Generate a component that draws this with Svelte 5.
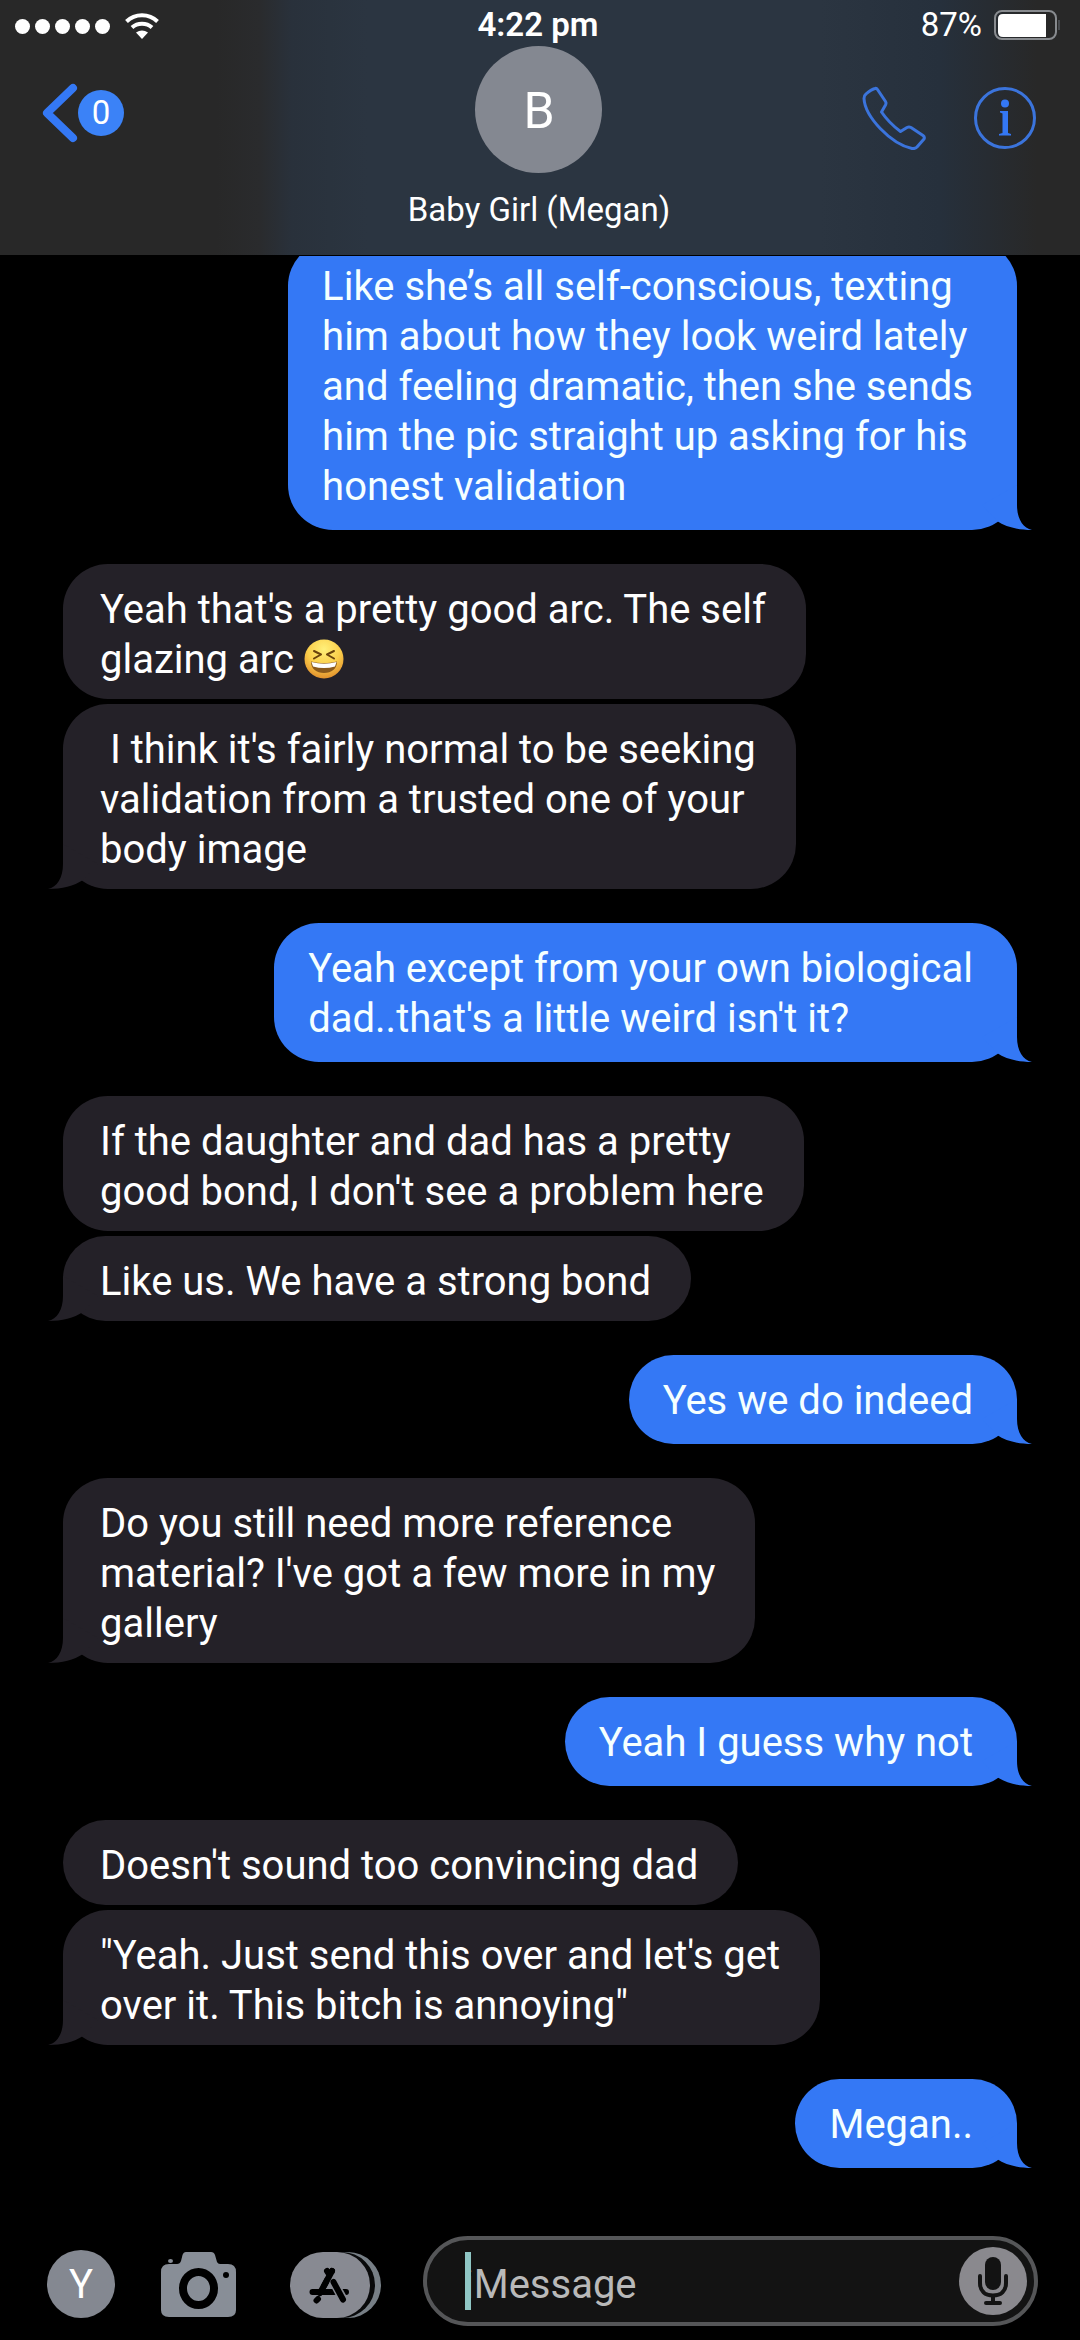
<script>
  let contact = 'Baby Girl (Megan)';
  let draft = '';

  const messages = [
    { from: 'me', last: true, text: 'Like she’s all self-conscious, texting\nhim about how they look weird lately\nand feeling dramatic, then she sends\nhim the pic straight up asking for his\nhonest validation' },
    { from: 'them', text: "Yeah that's a pretty good arc. The self\nglazing arc ", emoji: true },
    { from: 'them', last: true, text: " I think it's fairly normal to be seeking\nvalidation from a trusted one of your\nbody image" },
    { from: 'me', last: true, text: "Yeah except from your own biological\ndad..that's a little weird isn't it?" },
    { from: 'them', text: "If the daughter and dad has a pretty\ngood bond, I don't see a problem here" },
    { from: 'them', last: true, text: 'Like us. We have a strong bond' },
    { from: 'me', last: true, text: 'Yes we do indeed' },
    { from: 'them', last: true, text: "Do you still need more reference\nmaterial? I've got a few more in my\ngallery" },
    { from: 'me', last: true, text: 'Yeah I guess why not' },
    { from: 'them', text: "Doesn't sound too convincing dad" },
    { from: 'them', last: true, text: '"Yeah. Just send this over and let\'s get\nover it. This bitch is annoying"' },
    { from: 'me', last: true, text: 'Megan..' }
  ];
</script>

<div class="app">
  <header>
    <div class="status">
      <div class="signal">
        {#each Array(5) as _}
          <span class="dot"></span>
        {/each}
        <svg class="wifi" width="34" height="26" viewBox="0 0 34 26" fill="none" stroke="#fff" stroke-width="4">
          <path d="M1.5 8.5C10 .2 24 .2 32.500 8.500" />
          <path d="M7 14.500C12.500 9.500 21.500 9.500 27 14.500" />
          <path d="M11 19.500Q17 15.500 23 19.500L17 26Z" fill="#fff" stroke="none" />
        </svg>
      </div>
      <time>4:22 pm</time>
      <div class="power">
        <span>87%</span>
        <svg width="67" height="30" viewBox="0 0 67 30">
          <rect x="1" y="1" width="61" height="28" rx="7" fill="none" stroke="#888b8f" stroke-width="2" />
          <path d="M9 4H52V27H9Q4 27 4 22V9Q4 4 9 4Z" fill="#fff" />
          <path d="M65 10V20" stroke="#6b7178" stroke-width="1" />
        </svg>
      </div>
    </div>

    <nav>
      <button class="back" aria-label="Back">
        <svg width="36" height="60" viewBox="0 0 36 60" fill="none" stroke="#3478f5" stroke-width="8" stroke-linecap="round" stroke-linejoin="round">
          <path d="M31 5L5 30L31 55" />
        </svg>
        <span class="count">0</span>
      </button>

      <div class="contact">
        <span class="avatar">B</span>
        <h1>{contact}</h1>
      </div>

      <div class="actions">
        <button aria-label="Call">
          <svg width="64" height="64" viewBox="0 0 64 64" fill="none" stroke="#3b74dc" stroke-width="3" stroke-linejoin="round">
            <path d="M13 2.500Q14.500 2 15.500 3.500L23.500 15.500Q24.500 17 23.500 19L19.500 26Q27 37 38.500 45.500L45 41.500Q47 40.500 49 41.500L61 49.500Q63 51 62 53L55 61Q53 63 50 62.500C29 58 3 31 2 12.500Q2 9.500 4 8Q9 3.500 13 2.500Z" />
          </svg>
        </button>
        <button aria-label="Info">
          <svg width="62" height="62" viewBox="0 0 62 62">
            <circle cx="31" cy="31" r="29.500" fill="none" stroke="#3b74dc" stroke-width="3" />
            <circle cx="31" cy="16.500" r="4" fill="#3478f5" />
            <path d="M26 24H34V46L37 47V48.500H25V47L28.500 46V26.500L26 25.500Z" fill="#3478f5" />
          </svg>
        </button>
      </div>
    </nav>
  </header>

  <main>
    {#each messages as message}
      <div class="bubble {message.from}" class:last={message.last}>
        <p>{message.text}{#if message.emoji}<svg class="emoji" role="img" aria-label="😆" width="40" height="40" viewBox="0 0 40 40">
            <defs>
              <radialGradient id="face" cx="50%" cy="25%" r="75%">
                <stop offset="0" stop-color="#fff07a" />
                <stop offset="0.550" stop-color="#fbcf4b" />
                <stop offset="1" stop-color="#e2912d" />
              </radialGradient>
            </defs>
            <circle cx="20" cy="20" r="19.500" fill="url(#face)" />
            <path d="M10 12L17 15.500L10 19.500M30 12L23 15.500L30 19.500" fill="none" stroke="#6b430c" stroke-width="2" stroke-linecap="round" stroke-linejoin="round" />
            <path d="M7 22.500Q20 26 33 22.500C33 30 27.500 34 20 34S7 30 7 22.500Z" fill="#8b5a1c" />
            <path d="M7.500 23Q20 26.500 32.500 23L31 27.500Q20 30.500 9 27.500Z" fill="#fff" />
          </svg>{/if}</p>
        {#if message.last}
          <svg class="tail" width="50" height="45" viewBox="0 0 50 45" fill="currentColor">
            <path d="M35 0V20C35 34 41 43 50 45C36 45 24 42 15 36L0 20Z" />
          </svg>
        {/if}
      </div>
    {/each}
  </main>

  <footer>
    <div class="tools">
      <button class="me-avatar">Y</button>
      <button class="camera" aria-label="Camera">
        <svg width="75" height="66" viewBox="0 0 75 66">
          <path d="M25 0H50Q53 0 54 3L56 10Q57 12 59 12H67Q75 12 75 20V58Q75 65 67 65H8Q0 65 0 58V20Q0 12 8 12H16Q19 12 20 9L21.500 3Q22.500 0 25 0Z" fill="#888e97" />
          <ellipse cx="9.500" cy="9" rx="2.500" ry="2" fill="#888e97" />
          <ellipse cx="37.500" cy="36.500" rx="15.500" ry="16.500" fill="none" stroke="#000" stroke-width="8" />
          <circle cx="65" cy="23" r="3" fill="#000" />
        </svg>
      </button>
      <button aria-label="Apps">
        <svg width="91" height="66" viewBox="0 0 91 66">
          <rect x="20" y="0" width="71" height="66" rx="33" fill="#777f86" />
          <rect x="4" y="0" width="81" height="66" rx="33" fill="#08090a" />
          <rect x="0" y="0" width="80" height="66" rx="33" fill="#888a92" />
          <g fill="none" stroke="#000" stroke-width="6" stroke-linecap="round">
            <path d="M42 19L30 41M28 47L26.500 48.500" />
            <path d="M22.500 40H44M50 40H56" />
            <path d="M39 22L53 47" stroke="#888a92" stroke-width="9" stroke-linecap="butt" />
            <path d="M37 19L39 22M43.500 30L53 47.500" />
            <path d="M42 19L34 34" />
          </g>
        </svg>
      </button>
    </div>
    <div class="field">
      <input type="text" aria-label="Message" placeholder="iMessage" bind:value={draft} />
      <span class="caret"></span>
      <button aria-label="Dictate">
        <svg width="68" height="68" viewBox="0 0 68 68">
          <circle cx="34" cy="34" r="34" fill="#8a898e" />
          <rect x="26" y="10" width="16" height="33" rx="8" fill="#131313" />
          <g fill="none" stroke="#131313" stroke-width="4" stroke-linecap="round">
            <path d="M21 29V36C21 44 26 48.500 34 48.500S47 44 47 36V29" />
            <path d="M34 49V56M27 56H41" />
          </g>
        </svg>
      </button>
    </div>
  </footer>
</div>

<style>
  :global(body) {
    margin: 0;
    background: #000;
  }

  .app {
    display: flex;
    flex-direction: column;
    height: 100vh;
    font-family: Roboto, 'Liberation Sans', sans-serif;
    font-size: 40px;
    color: #fff;
    background: #000;
  }

  button {
    display: flex;
    align-items: center;
    padding: 0;
    border: none;
    background: none;
    color: inherit;
    font: inherit;
    cursor: pointer;
  }

  svg {
    display: block;
    flex: none;
  }

  header {
    flex: none;
    border-bottom: 1px solid #000;
    background: linear-gradient(90deg, #282828 20%, #2a2b2d 24%, #29313b 27%, #2b3541 34%, #2b3541 76%, #26303c 87%, #282828 96%);
  }

  .status {
    display: grid;
    grid-template-columns: 1fr auto 1fr;
    height: 46px;
    padding: 0 19px 0 15px;
    font-size: 33px;
    line-height: 50px;
  }

  .status time {
    font-weight: 600;
  }

  .signal {
    display: flex;
    align-items: center;
    gap: 5px;
    height: 52px;
  }

  .dot {
    width: 15px;
    height: 15px;
    border-radius: 50%;
    background: #fff;
  }

  .wifi {
    margin-left: 10px;
  }

  .power {
    display: flex;
    justify-content: flex-end;
    align-items: center;
    gap: 12px;
    height: 50px;
  }

  nav {
    display: grid;
    grid-template-columns: 1fr auto 1fr;
    align-items: start;
    padding: 0 44px 26px 42px;
  }

  .back {
    justify-self: start;
    margin-top: 37px;
  }

  .count {
    width: 46px;
    height: 46px;
    border-radius: 50%;
    background: #3b82f7;
    font-size: 33px;
    line-height: 46px;
    text-align: center;
  }

  .contact {
    display: flex;
    flex-direction: column;
    align-items: center;
    gap: 16px;
  }

  .avatar {
    width: 127px;
    height: 127px;
    border-radius: 50%;
    background: #848891;
    font-size: 50px;
    line-height: 130px;
    text-align: center;
  }

  h1 {
    margin: 0;
    font-size: 33px;
    font-weight: 400;
    line-height: 42px;
    height: 40px;
  }

  .actions {
    display: flex;
    justify-content: flex-end;
    gap: 48px;
    margin-top: 40px;
  }

  main {
    flex: 1;
    display: flex;
    flex-direction: column;
    justify-content: flex-end;
    align-items: flex-start;
    gap: 5px;
    min-height: 0;
    overflow: hidden;
    padding: 0 63px 5px;
  }

  .bubble {
    position: relative;
    flex: none;
    padding: 21px 40px 14px 37px;
    border-radius: 45px;
    background: #242128;
  }

  .bubble.last {
    margin-bottom: 29px;
  }

  .bubble.me {
    align-self: flex-end;
    padding: 21px 44px 18px 34px;
    background: #3478f5;
    color: #f5ffff;
  }

  .bubble p {
    margin: 0;
    line-height: 50px;
    white-space: pre;
  }

  .tail {
    position: absolute;
    right: -15px;
    bottom: 0;
    color: #3478f5;
  }

  .them .tail {
    right: auto;
    left: -15px;
    transform: scaleX(-1);
    color: #242128;
  }

  .emoji {
    display: inline-block;
    vertical-align: -6px;
  }

  footer {
    flex: none;
    display: flex;
    align-items: center;
    padding: 34px 42px 14px 47px;
    gap: 42px;
  }

  .tools {
    display: flex;
    align-items: flex-end;
    gap: 46px;
    padding-top: 6px;
  }

  .me-avatar {
    justify-content: center;
    width: 68px;
    height: 68px;
    border-radius: 50%;
    background: #848891;
    font-size: 40px;
  }

  .camera {
    margin-right: 8px;
  }

  .field {
    position: relative;
    flex: 1;
    display: flex;
    align-items: center;
    box-sizing: border-box;
    height: 90px;
    min-width: 0;
    padding: 0 7px 0 37px;
    border: 4px solid #555658;
    border-radius: 45px;
    background: #131313;
  }

  input {
    flex: 1;
    min-width: 0;
    padding: 6px 0 0;
    border: none;
    outline: none;
    background: none;
    color: #fff;
    font: inherit;
  }

  input::placeholder {
    color: #b9b9b9;
    opacity: 1;
  }

  .caret {
    position: absolute;
    left: 38px;
    width: 6px;
    height: 58px;
    background: #8fc6c4;
  }
</style>
